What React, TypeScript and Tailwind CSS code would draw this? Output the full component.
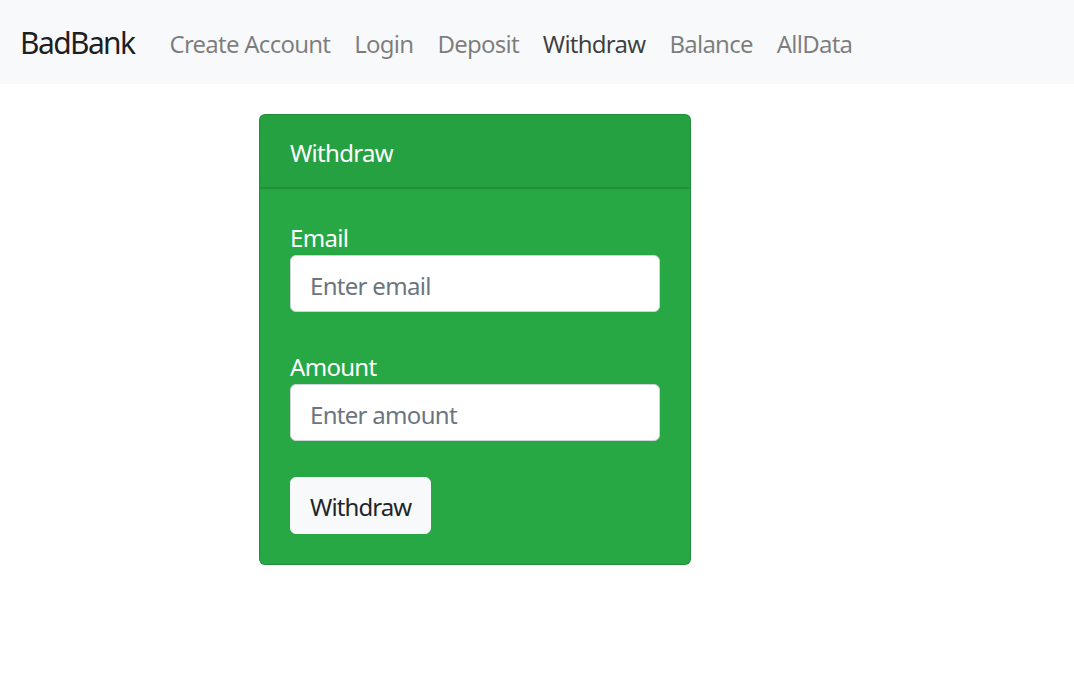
import React from "react";

const links = ["Create Account", "Login", "Deposit", "Withdraw", "Balance", "AllData"];

export default function App() {
  return (
    <div className="min-h-screen bg-white font-['Noto_Sans',sans-serif] tracking-[-0.7px]">
      <nav className="flex items-center bg-[#f8f9fa] px-[20px] py-[12px] h-[84px]">
        <a className="mr-[23px] py-[7px] text-[30px] leading-[45px] tracking-[-1.6px] text-black/90">BadBank</a>
        <ul className="flex">
          {links.map((l) => (
            <li key={l}>
              <a
                className={`block px-[12px] pt-[14px] pb-[10px] text-[24px] leading-[36px] tracking-[-0.75px] ${
                  l === "Withdraw" ? "text-black/75" : "text-black/50"
                }`}
              >
                {l}
              </a>
            </li>
          ))}
        </ul>
      </nav>

      <div className="pl-[259px] pt-[30px]">
        <div className="w-[432px] rounded-[6px] border border-black/15 bg-[#28a745] text-white">
          <div className="border-b-2 border-black/10 bg-black/[0.03] px-[30px] pt-[20px] pb-[16px] text-[24px] leading-[36px]">
            Withdraw
          </div>
          <div className="p-[30px] text-[24px] leading-[36px]">
            <label className="block pt-[1px] h-[36px]">Email</label>
            <input
              className="block h-[57px] w-full rounded-[6px] border border-[#ced4da] bg-white px-[19px] pt-[3px] text-[24px] text-[#495057] placeholder:text-[#6c757d] outline-none"
              placeholder="Enter email"
            />
            <div className="h-[36px]" />
            <label className="block pt-[1px] h-[36px]">Amount</label>
            <input
              className="block h-[57px] w-full rounded-[6px] border border-[#ced4da] bg-white px-[19px] pt-[3px] text-[24px] text-[#495057] placeholder:text-[#6c757d] outline-none"
              placeholder="Enter amount"
            />
            <div className="h-[36px]" />
            <button className="h-[57px] rounded-[6px] border border-[#f8f9fa] bg-[#f8f9fa] px-[19px] pt-[3px] text-[24px] leading-[36px] tracking-[-0.9px] text-[#212529]">
              Withdraw
            </button>
          </div>
        </div>
      </div>
    </div>
  );
}
